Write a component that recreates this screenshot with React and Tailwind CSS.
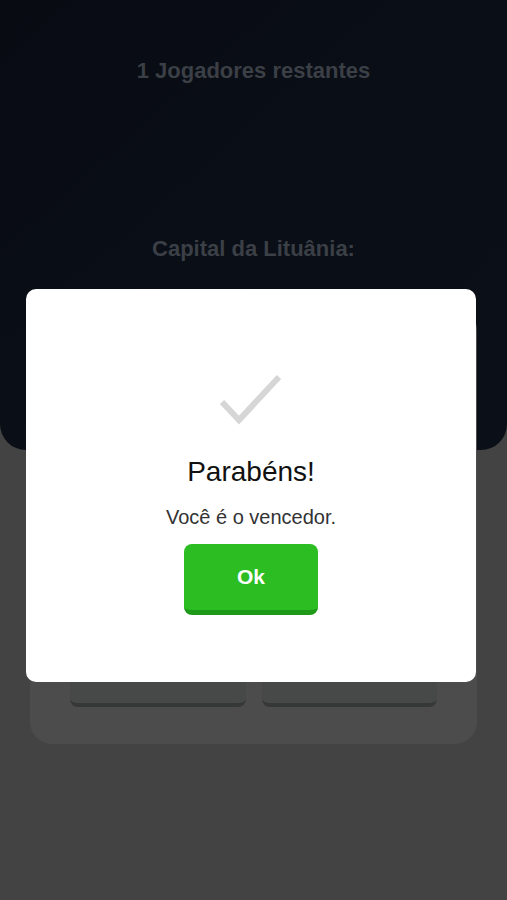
import React from "react";

export default function App() {
  return (
    <div
      className="relative w-[507px] h-[900px] overflow-hidden bg-[#434343]"
      style={{ fontFamily: '"Liberation Sans", Arial, sans-serif' }}
    >
      <div className="h-[450px] rounded-b-[26px] bg-gradient-to-br from-[#080b12] via-[#0a0e16] to-[#0b0f17] flex flex-col items-center">
        <div className="mt-[58px] text-[22px] leading-[26px] font-bold text-[#3b3f46]">1 Jogadores restantes</div>
        <div className="mt-[152px] text-[22px] leading-[26px] font-bold text-[#3b3f46]">Capital da Lituânia:</div>
      </div>
      <div className="-mt-[142px] mx-[30px] h-[436px] rounded-[22px] bg-[#4c4c4c] flex flex-col justify-end pb-[37px] px-[40px]">
        <div className="flex gap-[16px]">
          <div className="flex-1 h-[60px] rounded-[8px] bg-[#474949] border-b-[4px] border-[#363737]"></div>
          <div className="flex-1 h-[60px] rounded-[8px] bg-[#474949] border-b-[4px] border-[#363737]"></div>
        </div>
      </div>

      <div className="absolute left-[26px] top-[289px] w-[450px] h-[393px] bg-white rounded-[10px] flex flex-col items-center">
        <svg className="mt-[83px]" width="68" height="54" viewBox="0 0 68 54" fill="none">
          <path d="M5 30 L22 48 L62 5" stroke="#d6d6d6" strokeWidth="6" strokeLinecap="butt" strokeLinejoin="miter" />
        </svg>
        <div className="mt-[30px] text-[28px] leading-[32px] text-[#111111]">Parabéns!</div>
        <div className="mt-[17px] text-[20px] leading-[24px] text-[#333333]">Você é o vencedor.</div>
        <button className="mt-[15px] w-[134px] h-[71px] rounded-[8px] bg-[#2bbd22] border-b-[5px] border-[#1e9a18] text-white font-bold text-[21px] flex items-center justify-center">
          Ok
        </button>
      </div>
    </div>
  );
}
